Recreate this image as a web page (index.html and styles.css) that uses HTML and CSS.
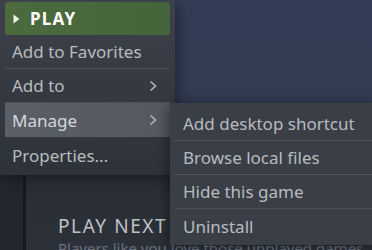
FILE: index.html
```html
<!DOCTYPE html>
<html>
<head>
<meta charset="utf-8">
<link rel="stylesheet" href="styles.css">
</head>
<body>
<div class="page">
  <div class="sidebar"></div>
  <div class="main">
    <div class="hero"></div>
    <div class="section">
      <div class="section-title">PLAY NEXT</div>
      <div class="section-sub">Players like you love those unplayed games</div>
    </div>
  </div>

  <div class="menu">
    <div class="item play"><svg class="tri" width="7" height="10" viewBox="0 0 7 10"><polygon points="0.5,0.5 6.5,5 0.5,9.5" fill="#eef0ec"/></svg><span class="play-text">PLAY</span></div>
    <div class="item sep">Add to Favorites</div>
    <div class="item sep">Add to<svg class="chev" width="8" height="12" viewBox="0 0 8 12"><polyline points="1.5,1.5 6.5,6 1.5,10.5" fill="none" stroke="#b8bcbf" stroke-width="1.5"/></svg></div>
    <div class="item hover">Manage<svg class="chev" width="8" height="12" viewBox="0 0 8 12"><polyline points="1.5,1.5 6.5,6 1.5,10.5" fill="none" stroke="#b8bcbf" stroke-width="1.5"/></svg></div>
    <div class="item last">Properties...</div>
  </div>

  <div class="submenu">
    <div class="item sep">Add desktop shortcut</div>
    <div class="item sep">Browse local files</div>
    <div class="item sep">Hide this game</div>
    <div class="item">Uninstall</div>
  </div>
</div>
</body>
</html>
```

FILE: styles.css
```css
html, body {
  margin: 0;
  padding: 0;
}
body {
  width: 372px;
  height: 250px;
  overflow: hidden;
  font-family: "Noto Sans", "Open Sans", sans-serif;
}
.page {
  position: relative;
  width: 372px;
  height: 250px;
  display: flex;
  overflow: hidden;
  background: #262b33;
}
.sidebar {
  width: 23px;
  flex: none;
  background: #22262d;
  border-right: 3px solid #17191d;
}
.main {
  flex: 1;
  display: flex;
  flex-direction: column;
  background: linear-gradient(180deg, #252a31 0%, #2b3039 100%);
}
.hero {
  height: 125px;
  flex: none;
  background: linear-gradient(180deg, #333e56 0%, #323d54 70%, #2a3040 100%);
}
.section {
  padding: 90px 0 0 32px;
  white-space: nowrap;
}
.section-title {
  font-size: 19px;
  line-height: 22px;
  color: #bfc3c7;
  letter-spacing: 1.6px;
}
.section-sub {
  margin-top: 2px;
  font-size: 15px;
  line-height: 18px;
  color: #6c7380;
}

.menu {
  position: absolute;
  left: 0;
  top: 0;
  width: 165px;
  height: 173px;
  padding: 2px 5px 0 5px;
  background: linear-gradient(180deg, #3c414b 0%, #2e3239 100%);
  box-shadow: 4px 4px 12px rgba(0, 0, 0, 0.35);
}
.item {
  height: 34px;
  display: flex;
  align-items: center;
  padding-left: 7px;
  padding-right: 13px;
  box-sizing: border-box;
  font-size: 17px;
  color: #b8bcbf;
  white-space: nowrap;
  position: relative;
}
.item.sep {
  border-bottom: 1px solid #4a4f59;
}
.item .chev {
  margin-left: auto;
}
.play {
  height: 33px;
  background: linear-gradient(90deg, #4b6b3d 0%, #46643b 100%);
  border-radius: 3px;
  padding-left: 8px;
  color: #ffffff;
}
.tri {
  margin-right: 10px;
}
.play-text {
  font-weight: bold;
  letter-spacing: 1.2px;
  font-size: 17px;
}
.hover {
  background: linear-gradient(90deg, #5a5f68 0%, #535861 100%);
  color: #d4d7d9;
}
.last {
  height: 36px;
}

.submenu {
  position: absolute;
  left: 170px;
  top: 103px;
  width: 200px;
  height: 138px;
  padding: 4px 5px 0 5px;
  background: #393e47;
  box-shadow: -3px 3px 10px rgba(0, 0, 0, 0.35);
}
.submenu .item {
  height: 34px;
  padding-left: 8px;
}
.submenu .item.sep {
  border-bottom: 1px solid #4a4f59;
}
```
